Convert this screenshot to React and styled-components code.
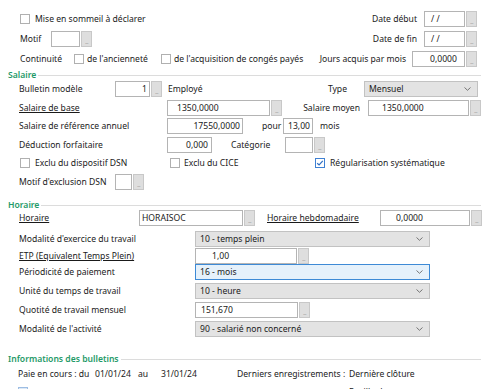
import React from "react";
import styled, { createGlobalStyle } from "styled-components";

const GlobalStyle = createGlobalStyle`
  html, body {
    margin: 0;
    padding: 0;
    background: #fff;
  }
  body {
    font-family: "Noto Sans", "Liberation Sans", sans-serif;
    font-size: 8.6px;
    color: #1a1a1a;
  }
`;

const Page = styled.div`
  width: 489px;
  height: 389px;
  overflow: hidden;
  padding-top: 10px;
  box-sizing: border-box;
  background: #fff;
`;

const Block = styled.div`
  display: flex;
  flex-direction: column;
  gap: ${(p) => p.$gap || 0}px;
`;

const Row = styled.div`
  display: flex;
  align-items: center;
  height: ${(p) => p.$h || 18}px;
  padding-left: ${(p) => p.$pl ?? 19}px;
  padding-right: ${(p) => p.$pr ?? 0}px;
  margin-top: ${(p) => p.$mt || 0}px;
  white-space: nowrap;
`;

const Right = styled.div`
  display: flex;
  align-items: center;
  margin-left: auto;
`;

const Label = styled.span`
  display: inline-block;
  flex-shrink: 0;
  width: ${(p) => (p.$w ? p.$w + "px" : "auto")};
  margin-left: ${(p) => p.$ml || 0}px;
  text-decoration: ${(p) => (p.$u ? "underline" : "none")};
  text-underline-offset: 1px;
`;

const SectionHead = styled.div`
  display: flex;
  align-items: center;
  height: 10px;
  margin-top: ${(p) => p.$mt || 0}px;
  padding: 0 8px 0 8px;
  color: #1f9a68;
  font-weight: 600;
  white-space: nowrap;

  &::after {
    content: "";
    flex: 1;
    height: 1px;
    background: #dcdcdc;
    margin-left: 2px;
  }
`;

const Box = styled.span`
  box-sizing: border-box;
  width: 10px;
  height: 10px;
  flex-shrink: 0;
  border: 1px solid ${(p) => (p.$checked ? "#3f80d3" : p.$tint ? "#9dbde3" : "#b0b0b0")};
  background: ${(p) => (p.$tint ? "#dde9f6" : "#fff")};
  display: flex;
  align-items: center;
  justify-content: center;
`;

function Checkbox({ checked, tint }) {
  return (
    <Box $checked={checked} $tint={tint}>
      {checked && (
        <svg width="8" height="8" viewBox="0 0 8 8">
          <polyline points="1.2,4.2 3.1,6 6.8,1.8" fill="none" stroke="#2f6fc4" strokeWidth="1.2" />
        </svg>
      )}
    </Box>
  );
}

const FieldWrap = styled.div`
  display: flex;
  gap: 1px;
  flex-shrink: 0;
  margin-left: ${(p) => p.$ml || 0}px;
`;

const Input = styled.div`
  box-sizing: border-box;
  width: ${(p) => p.$w}px;
  height: 16px;
  border: 1px solid #b4b4b4;
  background: #fff;
  display: flex;
  align-items: center;
  justify-content: ${(p) => (p.$align === "right" ? "flex-end" : "flex-start")};
  padding: 0 ${(p) => p.$pr ?? 2}px 0 ${(p) => p.$pl ?? 3}px;
  overflow: hidden;
`;

const DotButton = styled.div`
  box-sizing: border-box;
  width: 11px;
  height: 16px;
  background: #dedede;
  border: 1px solid #c8c8c8;
  display: flex;
  align-items: flex-end;
  justify-content: center;
  color: #9a9a9a;
  font-size: 6px;
  line-height: 7px;
  letter-spacing: -0.6px;
`;

function Field({ w, value, align, pl, pr, ml, btn = true }) {
  return (
    <FieldWrap $ml={ml}>
      <Input $w={w} $align={align} $pl={pl} $pr={pr}>
        {value}
      </Input>
      {btn && <DotButton>...</DotButton>}
    </FieldWrap>
  );
}

const SelectBox = styled.div`
  box-sizing: border-box;
  width: ${(p) => p.$w}px;
  height: 16px;
  flex-shrink: 0;
  margin-left: ${(p) => p.$ml || 0}px;
  display: flex;
  align-items: center;
  justify-content: space-between;
  padding: 0 6px 0 4px;
  background: ${(p) => (p.$active ? "#e5f1fb" : "#e3e3e3")};
  border: 1px solid ${(p) => (p.$active ? "#3d8ad6" : "#c2c2c2")};
`;

function Select({ w, value, active, ml }) {
  return (
    <SelectBox $w={w} $active={active} $ml={ml}>
      <span>{value}</span>
      <svg width="7" height="4" viewBox="0 0 7 4">
        <polyline points="0.5,0.5 3.5,3.3 6.5,0.5" fill="none" stroke="#6a6a6a" strokeWidth="0.9" />
      </svg>
    </SelectBox>
  );
}

const HourGrid = styled.div`
  display: grid;
  grid-template-columns: 176px auto;
  grid-template-rows: 17px 16px 19px 19px 19px 17px;
  align-items: start;
  padding-left: 19px;
  margin-top: 5px;
  white-space: nowrap;

  & > span {
    line-height: 16px;
  }
`;

const HourLabel = styled.span`
  text-decoration: ${(p) => (p.$u ? "underline" : "none")};
  text-underline-offset: 1px;
`;

const Cell = styled.div`
  display: flex;
`;

export default function App() {
  return (
    <Page>
      <GlobalStyle />

      <Block $gap={2}>
        <Row $pl={20} $pr={12}>
          <Checkbox />
          <Label $ml={5}>Mise en sommeil à déclarer</Label>
          <Right>
            <Label>Date début</Label>
            <Field ml={7} w={41} value="/ /" pl={6} />
          </Right>
        </Row>
        <Row $pl={20} $pr={12}>
          <Label $w={31}>Motif</Label>
          <Field w={29} value="" />
          <Right>
            <Label>Date de fin</Label>
            <Field ml={7} w={41} value="/ /" pl={6} />
          </Right>
        </Row>
        <Row $pl={20} $pr={12}>
          <Label $w={54}>Continuité</Label>
          <Checkbox />
          <Label $ml={3} $w={74}>de l'ancienneté</Label>
          <Checkbox />
          <Label $ml={3}>de l'acquisition de congés payés</Label>
          <Right>
            <Label>Jours acquis par mois</Label>
            <Field ml={6} w={53} value="0,0000" pl={17} />
          </Right>
        </Row>
      </Block>

      <SectionHead $mt={2}>Salaire</SectionHead>
      <Block $gap={0.5}>
        <Row $pr={11}>
          <Label $w={96}>Bulletin modèle</Label>
          <Field w={35} value="1" align="right" pr={2} />
          <Label $ml={6}>Employé</Label>
          <Right>
            <Label>Type</Label>
            <Select ml={17} w={114} value="Mensuel" />
          </Right>
        </Row>
        <Row $pr={8}>
          <Label $w={148} $u>Salaire de base</Label>
          <Field w={103} value="1350,0000" pl={9} />
          <Right>
            <Label>Salaire moyen</Label>
            <Field ml={8} w={101} value="1350,0000" pl={13} />
          </Right>
        </Row>
        <Row>
          <Label $w={148}>Salaire de référence annuel</Label>
          <Field w={76} value="17550,0000" align="right" pr={2} btn={false} />
          <Label $ml={19} $w={21}>pour</Label>
          <Field w={30} value="13,00" align="right" pr={2} btn={false} />
          <Label $ml={7}>mois</Label>
        </Row>
        <Row>
          <Label $w={148}>Déduction forfaitaire</Label>
          <Field w={45} value="0,000" align="right" pr={3} btn={false} />
          <Label $ml={19} $w={54}>Catégorie</Label>
          <Field w={28} value="" />
        </Row>
        <Row $pl={20}>
          <Checkbox />
          <Label $ml={5} $w={135}>Exclu du dispositif DSN</Label>
          <Checkbox />
          <Label $ml={4} $w={131}>Exclu du CICE</Label>
          <Checkbox checked />
          <Label $ml={5}>Régularisation systématique</Label>
        </Row>
        <Row>
          <Label $w={96}>Motif d'exclusion DSN</Label>
          <Field w={17} value="" />
        </Row>
      </Block>

      <SectionHead $mt={9.5}>Horaire</SectionHead>
      <Row $h={16}>
        <Label $w={120} $u>Horaire</Label>
        <Field w={104} value="HORAISOC" pl={2} />
        <Label $ml={12} $w={113} $u>Horaire hebdomadaire</Label>
        <Field w={90} value="0,0000" pl={15} />
      </Row>
      <HourGrid>
        <HourLabel>Modalité d'exercice du travail</HourLabel>
        <Cell>
          <Select w={235} value="10 - temps plein" />
        </Cell>
        <HourLabel $u>ETP (Equivalent Temps Plein)</HourLabel>
        <Cell>
          <Field w={102} value="1,00" pl={16} />
        </Cell>
        <HourLabel>Périodicité de paiement</HourLabel>
        <Cell>
          <Select w={235} value="16 - mois" active />
        </Cell>
        <HourLabel>Unité du temps de travail</HourLabel>
        <Cell>
          <Select w={235} value="10 - heure" />
        </Cell>
        <HourLabel>Quotité de travail mensuel</HourLabel>
        <Cell>
          <Field w={103} value="151,670" pl={5} />
        </Cell>
        <HourLabel>Modalité de l'activité</HourLabel>
        <Cell>
          <Select w={235} value="90 - salarié non concerné" />
        </Cell>
      </HourGrid>

      <SectionHead $mt={16}>Informations des bulletins</SectionHead>
      <Row $pl={18} $mt={1}>
        <Label $w={77}>Paie en cours : du</Label>
        <Label $w={43}>01/01/24</Label>
        <Label $w={23}>au</Label>
        <Label $w={76}>31/01/24</Label>
        <Label $w={112}>Derniers enregistrements :</Label>
        <Label>Dernière clôture</Label>
      </Row>
      <Row $pl={18}>
        <Checkbox tint />
        <Label $ml={321}>Feuille de temps</Label>
      </Row>
    </Page>
  );
}
